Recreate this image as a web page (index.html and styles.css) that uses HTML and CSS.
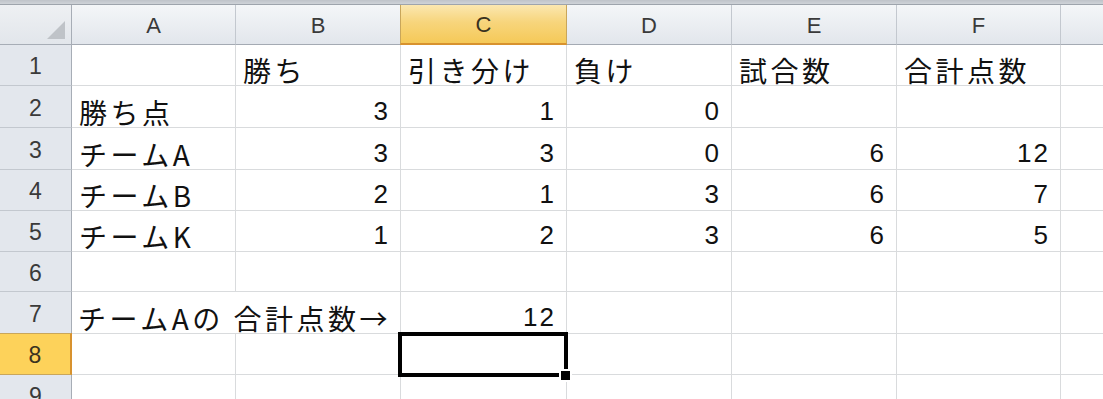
FILE: index.html
```html
<!DOCTYPE html>
<html lang="ja">
<head>
<meta charset="utf-8">
<link rel="stylesheet" href="styles.css">
</head>
<body>
<div class="strip"></div>
<div class="sheet">
  <div class="corner"><span class="tri"></span></div>
  <div class="ch">A</div>
  <div class="ch">B</div>
  <div class="ch sel">C</div>
  <div class="ch">D</div>
  <div class="ch">E</div>
  <div class="ch">F</div>
  <div class="ch last"></div>

  <div class="rh">1</div>
  <div class="c"></div>
  <div class="c">勝ち</div>
  <div class="c">引き分け</div>
  <div class="c">負け</div>
  <div class="c">試合数</div>
  <div class="c">合計点数</div>
  <div class="c last"></div>

  <div class="rh">2</div>
  <div class="c">勝ち点</div>
  <div class="c n">3</div>
  <div class="c n">1</div>
  <div class="c n">0</div>
  <div class="c"></div>
  <div class="c"></div>
  <div class="c last"></div>

  <div class="rh">3</div>
  <div class="c">チームA</div>
  <div class="c n">3</div>
  <div class="c n">3</div>
  <div class="c n">0</div>
  <div class="c n">6</div>
  <div class="c n">12</div>
  <div class="c last"></div>

  <div class="rh">4</div>
  <div class="c">チームB</div>
  <div class="c n">2</div>
  <div class="c n">1</div>
  <div class="c n">3</div>
  <div class="c n">6</div>
  <div class="c n">7</div>
  <div class="c last"></div>

  <div class="rh">5</div>
  <div class="c">チームK</div>
  <div class="c n">1</div>
  <div class="c n">2</div>
  <div class="c n">3</div>
  <div class="c n">6</div>
  <div class="c n">5</div>
  <div class="c last"></div>

  <div class="rh">6</div>
  <div class="c"></div>
  <div class="c"></div>
  <div class="c"></div>
  <div class="c"></div>
  <div class="c"></div>
  <div class="c"></div>
  <div class="c last"></div>

  <div class="rh">7</div>
  <div class="c span2">チームAの 合計点数→</div>
  <div class="c n">12</div>
  <div class="c"></div>
  <div class="c"></div>
  <div class="c"></div>
  <div class="c last"></div>

  <div class="rh sel">8</div>
  <div class="c"></div>
  <div class="c"></div>
  <div class="c active"><span class="handle"></span></div>
  <div class="c"></div>
  <div class="c"></div>
  <div class="c"></div>
  <div class="c last"></div>

  <div class="rh">9</div>
  <div class="c"></div>
  <div class="c"></div>
  <div class="c"></div>
  <div class="c"></div>
  <div class="c"></div>
  <div class="c"></div>
  <div class="c last"></div>
</div>
</body>
</html>
```
FILE: styles.css
```css
html, body {
  margin: 0;
  padding: 0;
  background: #ffffff;
  overflow: hidden;
}
body {
  width: 1103px;
  height: 399px;
  font-family: "Noto Sans CJK JP", "DejaVu Sans", sans-serif;
}
.strip {
  height: 4px;
  background: linear-gradient(#bfc3c9, #cfd3d8);
  border-bottom: 1px solid #9ea4ac;
}
.sheet {
  display: grid;
  grid-template-columns: 72px 164px 165px 166px 165px 165px 164px 1fr;
  grid-template-rows: 40px 41px 42px 42px 41px 41px 40px 42px 41px 41px;
}
.corner {
  background: linear-gradient(#eef0f3, #e2e6eb);
  border-right: 1px solid #a7adb6;
  border-bottom: 1px solid #a7adb6;
  position: relative;
}
.tri {
  position: absolute;
  right: 6px;
  bottom: 5px;
  width: 0;
  height: 0;
  border-left: 18px solid transparent;
  border-bottom: 18px solid #bfc3c8;
}
.ch {
  background: linear-gradient(#f4f6f8, #e2e6ec);
  border-right: 1px solid #c3c8cf;
  border-bottom: 1px solid #a4aab3;
  display: flex;
  align-items: center;
  justify-content: center;
  font-family: "Liberation Sans", "DejaVu Sans", sans-serif;
  font-size: 22px;
  color: #3a3a3a;
  padding-top: 2px;
  box-sizing: border-box;
}
.ch.sel {
  background: linear-gradient(#fbe7b0, #f7d57c 45%, #f5c958);
  border-left: 1px solid #c9a65a;
  border-right: 1px solid #c9a65a;
  border-bottom: 2px solid #d8922e;
  margin-left: -1px;
  color: #3a3220;
}
.ch.last {
  border-right: none;
}
.rh {
  background: #e3e7ed;
  border-right: 1px solid #a7adb6;
  border-bottom: 1px solid #c3c8cf;
  display: flex;
  align-items: center;
  justify-content: center;
  font-family: "Liberation Sans", "DejaVu Sans", sans-serif;
  font-size: 23px;
  color: #3a3a3a;
  box-sizing: border-box;
  padding-top: 3px;
}
.rh.sel {
  background: #fdd25a;
  border-top: 1px solid #c9a65a;
  border-bottom: 1px solid #c9a65a;
  border-right: 2px solid #d8922e;
  margin-top: -1px;
  color: #3a3220;
}
.c {
  border-right: 1px solid #d9dbdd;
  border-bottom: 1px solid #d9dbdd;
  box-sizing: border-box;
  font-size: 28px;
  line-height: 1;
  color: #111;
  display: flex;
  align-items: flex-end;
  padding: 0 6px 1px 7px;
  white-space: nowrap;
  letter-spacing: 3.5px;
}
.c.n {
  justify-content: flex-end;
  font-family: "Liberation Sans", "DejaVu Sans", sans-serif;
  font-size: 26px;
  padding-right: 10px;
  padding-bottom: 3px;
  letter-spacing: 2px;
}
.c.last {
  border-right: none;
}
.c.span2 {
  grid-column: span 2;
  letter-spacing: 3.5px;
  padding-left: 6px;
}
.c.active {
  position: relative;
  overflow: visible;
}
.c.active::before {
  content: "";
  position: absolute;
  left: -3px;
  top: -2px;
  right: -2px;
  bottom: -3px;
  border: 4px solid #000;
  z-index: 2;
}
.handle {
  position: absolute;
  right: -6px;
  bottom: -8px;
  width: 9px;
  height: 9px;
  background: #000;
  border: 2px solid #fff;
  z-index: 3;
}
```
